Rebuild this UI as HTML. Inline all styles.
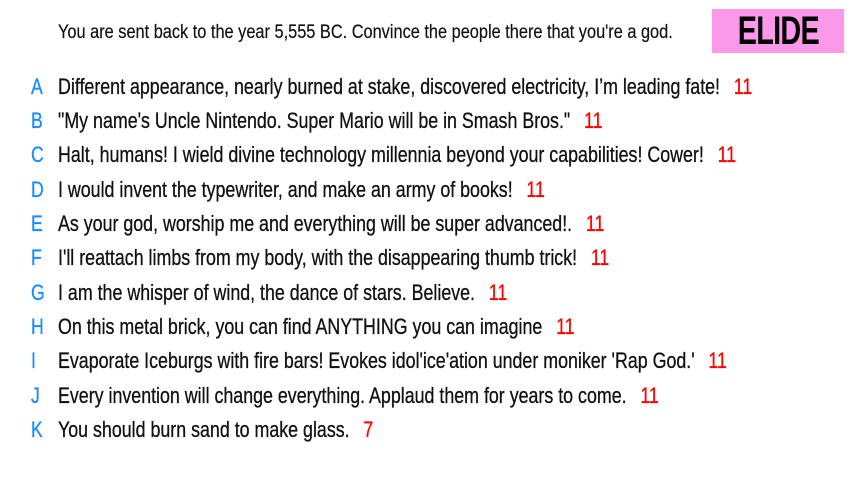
<!DOCTYPE html>
<html><head><style>
body{margin:0;width:853px;height:480px;background:#fff;position:relative;overflow:hidden;font-family:"Liberation Sans",sans-serif;color:#111}
.t{position:absolute;left:58px;top:22px;font-size:19px;white-space:nowrap;transform:scaleX(0.86);transform-origin:left center;-webkit-text-stroke:0.2px #111}
.logo{position:absolute;left:712px;top:9px;width:132px;height:44px;background:#fa98e9;font-weight:bold;font-size:40px;line-height:44px;text-align:center;color:#000;letter-spacing:-1px}
.logo span{display:inline-block;transform:scaleX(0.72)}
.r{position:absolute;left:0;height:30px;font-size:22px;line-height:30px;white-space:nowrap;-webkit-text-stroke:0.3px currentColor}
.l{position:absolute;left:31px;color:#1a8cff;display:inline-block;transform:scaleX(0.8);transform-origin:left center}
.x{position:absolute;left:58px;display:inline-block;transform:scaleX(0.81);transform-origin:left center}
.s{color:#f00;margin-left:17px}
</style></head><body>
<div class="t">You are sent back to the year 5,555 BC. Convince the people there that you're a god.</div>
<div class="logo"><span>ELIDE</span></div>
<div class="r" style="top:72px"><span class="l">A</span><span class="x">Different appearance, nearly burned at stake, discovered electricity, I’m leading fate!<span class="s">11</span></span></div>
<div class="r" style="top:106px"><span class="l">B</span><span class="x">"My name's Uncle Nintendo. Super Mario will be in Smash Bros."<span class="s">11</span></span></div>
<div class="r" style="top:140px"><span class="l">C</span><span class="x">Halt, humans! I wield divine technology millennia beyond your capabilities! Cower!<span class="s">11</span></span></div>
<div class="r" style="top:175px"><span class="l">D</span><span class="x">I would invent the typewriter, and make an army of books!<span class="s">11</span></span></div>
<div class="r" style="top:209px"><span class="l">E</span><span class="x">As your god, worship me and everything will be super advanced!.<span class="s">11</span></span></div>
<div class="r" style="top:243px"><span class="l">F</span><span class="x">I'll reattach limbs from my body, with the disappearing thumb trick!<span class="s">11</span></span></div>
<div class="r" style="top:278px"><span class="l">G</span><span class="x">I am the whisper of wind, the dance of stars. Believe.<span class="s">11</span></span></div>
<div class="r" style="top:312px"><span class="l">H</span><span class="x">On this metal brick, you can find ANYTHING you can imagine<span class="s">11</span></span></div>
<div class="r" style="top:346px"><span class="l">I</span><span class="x">Evaporate Iceburgs with fire bars! Evokes idol'ice'ation under moniker 'Rap God.'<span class="s">11</span></span></div>
<div class="r" style="top:381px"><span class="l">J</span><span class="x">Every invention will change everything. Applaud them for years to come.<span class="s">11</span></span></div>
<div class="r" style="top:415px"><span class="l">K</span><span class="x">You should burn sand to make glass.<span class="s">7</span></span></div>
</body></html>
